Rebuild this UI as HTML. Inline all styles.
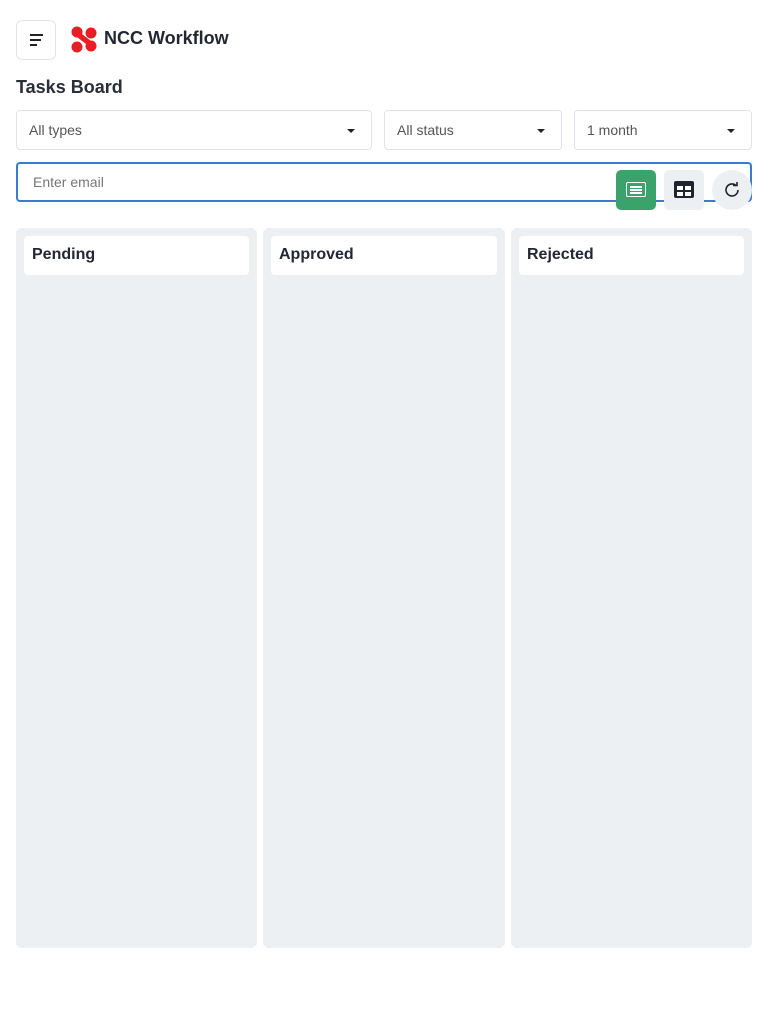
<!DOCTYPE html><html><head><style>
*{box-sizing:border-box}body{margin:0;background:#fff;font-family:"Liberation Sans",sans-serif;color:#1f2430;width:768px;height:1024px;position:relative}
.a{position:absolute}
.sel{position:absolute;top:110px;height:40px;border:1px solid #dfe3ea;border-radius:4px;font-size:14px;color:#555;padding:11px 12px}
.sel:after{content:"";position:absolute;right:16px;top:18px;border:4px solid transparent;border-top:4px solid #222;border-bottom:0}
.col{position:absolute;top:228px;height:720px;background:#edf0f3;border-radius:6px}
.hd{position:absolute;left:8px;right:8px;top:8px;height:39px;background:#fff;border-radius:4px;font-weight:bold;font-size:16px;padding:10px 8px;color:#232733}
</style></head><body>
<div class="a" style="left:16px;top:20px;width:40px;height:40px;border:1px solid #dfe3ea;border-radius:6px">
<div class="a" style="left:13px;top:13px;width:13px;height:2px;background:#222"></div>
<div class="a" style="left:13px;top:18px;width:11px;height:2px;background:#222"></div>
<div class="a" style="left:13px;top:23px;width:7px;height:2px;background:#222"></div></div>
<svg class="a" style="left:71px;top:26px" width="26" height="27" viewBox="0 0 26 27"><g fill="#ea1c24"><circle cx="6" cy="6" r="5.5"/><circle cx="20" cy="7" r="5.5"/><circle cx="6" cy="21" r="5.5"/><circle cx="20" cy="20" r="5.5"/><path d="M8 10L17 17L18 16L9 9Z" stroke="#ea1c24" stroke-width="4"/></g></svg>
<div class="a" style="left:104px;top:28px;font-size:18px;font-weight:bold;color:#232733">NCC Workflow</div>
<div class="a" style="left:16px;top:77px;font-size:18px;font-weight:bold;color:#2a2e38">Tasks Board</div>
<div class="sel" style="left:16px;width:356px">All types</div>
<div class="sel" style="left:384px;width:178px">All status</div>
<div class="sel" style="left:574px;width:178px">1 month</div>
<div class="a" style="left:16px;top:162px;width:736px;height:40px;border:2px solid #3a7bd0;border-radius:4px;font-size:14px;color:#777;padding:10px 15px">Enter email</div>
<div class="a" style="left:616px;top:170px;width:40px;height:40px;background:#3aa36b;border-radius:5px"><div class="a" style="left:10px;top:12px;width:20px;height:15px;border:1.5px solid #fff;border-radius:2px"></div><div class="a" style="left:14px;top:16px;width:12px;height:1.5px;background:#fff;box-shadow:0 3px 0 #fff,0 6px 0 #fff"></div></div>
<div class="a" style="left:664px;top:170px;width:40px;height:40px;background:#edf0f3;border-radius:5px"><div class="a" style="left:10px;top:11px;width:20px;height:17px;background:#1f2430;border-radius:2px"><div class="a" style="left:3px;top:5px;width:6px;height:4px;background:#fff"></div><div class="a" style="left:11px;top:5px;width:6px;height:4px;background:#fff"></div><div class="a" style="left:3px;top:11px;width:6px;height:4px;background:#fff"></div><div class="a" style="left:11px;top:11px;width:6px;height:4px;background:#fff"></div></div></div>
<div class="a" style="left:712px;top:170px;width:40px;height:40px;background:#edf0f3;border-radius:50%"><svg class="a" style="left:11px;top:11px" width="18" height="18" viewBox="0 0 18 18"><path d="M15 9a6 6 0 1 1-2-4.5" fill="none" stroke="#222" stroke-width="1.6"/><path d="M10 4.5h4V1" fill="none" stroke="#222" stroke-width="1.6"/></svg></div>
<div class="col" style="left:16px;width:241px"><div class="hd">Pending</div></div>
<div class="col" style="left:263px;width:242px"><div class="hd">Approved</div></div>
<div class="col" style="left:511px;width:241px"><div class="hd">Rejected</div></div>
</body></html>
